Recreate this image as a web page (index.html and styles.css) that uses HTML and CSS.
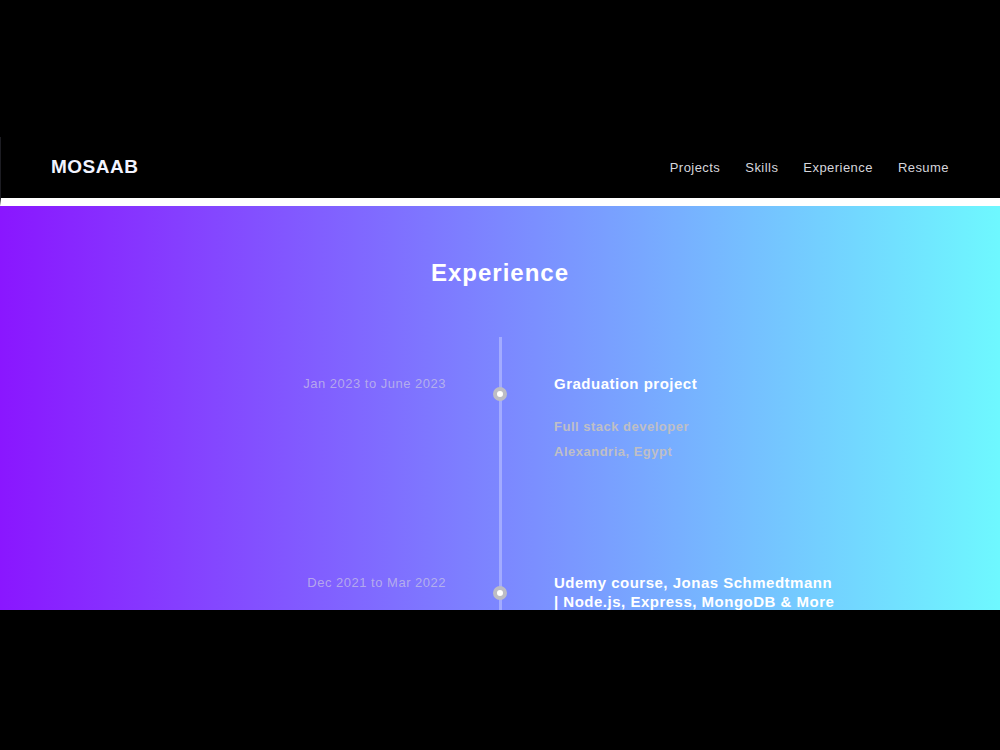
FILE: index.html
```html
<!DOCTYPE html>
<html lang="en">
<head>
  <meta charset="UTF-8">
  <title>Mosaab | Experience</title>
  <link rel="stylesheet" href="styles.css">
</head>
<body>

<div class="page">
  <header class="navbar">
    <div class="logo">MOSAAB</div>
    <nav class="links">
      <a href="#projects">Projects</a>
      <a href="#skills">Skills</a>
      <a href="#experience">Experience</a>
      <a href="#resume">Resume</a>
    </nav>
  </header>

  <section class="experience" id="experience">
    <h2>Experience</h2>

    <div class="timeline">
      <div class="item">
        <div class="date">Jan 2023 to June 2023</div>
        <div class="marker"><span class="dot"></span></div>
        <div class="content">
          <h3>Graduation project</h3>
          <p class="role">Full stack developer</p>
          <p class="place">Alexandria, Egypt</p>
        </div>
      </div>

      <div class="item">
        <div class="date">Dec 2021 to Mar 2022</div>
        <div class="marker"><span class="dot"></span></div>
        <div class="content">
          <h3>Udemy course, Jonas Schmedtmann<br>| Node.js, Express, MongoDB &amp; More</h3>
        </div>
      </div>
    </div>
  </section>
</div>

</body>
</html>
```

FILE: styles.css
```css
* {
  box-sizing: border-box;
}
body {
  margin: 0;
  padding-top: 137px;
  background-color: #000;
  font-family: 'Liberation Sans', Arial, sans-serif;
}
.page {
  height: 473px;
  overflow: hidden;
}
.navbar {
  height: 69px;
  padding: 0 51px 0 50px;
  display: flex;
  align-items: center;
  justify-content: space-between;
  background-color: #000;
  border-bottom: 8px solid #fff;
  border-left: 1px solid #1c1c22;
}
.logo {
  color: #f2f4ff;
  font-size: 19px;
  font-weight: bold;
  letter-spacing: 0.5px;
  padding-bottom: 1px;
}
.links {
  display: flex;
  gap: 25px;
}
.links a {
  color: #d6d6dc;
  text-decoration: none;
  font-size: 13px;
  letter-spacing: 0.45px;
}
.experience {
  height: 404px;
  padding-top: 53px;
  background: linear-gradient(90deg, #8a16ff, #6ef8ff);
}
.experience h2 {
  margin: 0 0 50px;
  text-align: center;
  color: #fff;
  font-size: 24px;
  line-height: 28px;
  letter-spacing: 1px;
}
.timeline {
  position: relative;
  padding-top: 37px;
}
.timeline::before {
  content: '';
  position: absolute;
  top: 0;
  bottom: 0;
  left: 499px;
  width: 3px;
  background-color: rgba(255, 255, 255, 0.3);
}
.item {
  display: grid;
  grid-template-columns: 1fr 108px 1fr;
  min-height: 199px;
}
.date {
  text-align: right;
  color: rgba(215, 212, 225, 0.62);
  font-size: 13px;
  line-height: 19px;
  letter-spacing: 0.5px;
}
.marker {
  display: flex;
  justify-content: center;
  padding-top: 13px;
}
.dot {
  position: relative;
  width: 14px;
  height: 14px;
  border-radius: 50%;
  background-color: #fff;
  border: 4.5px solid #bdbdc4;
}
.content h3 {
  margin: 0;
  color: #fff;
  font-size: 15px;
  line-height: 19px;
  letter-spacing: 0.5px;
}
.content p {
  margin: 0;
  color: #bfbfc6;
  font-size: 13px;
  font-weight: bold;
  line-height: 20px;
  letter-spacing: 0.5px;
}
.content .role {
  margin-top: 24px;
}
.content .place {
  margin-top: 5px;
}
```
